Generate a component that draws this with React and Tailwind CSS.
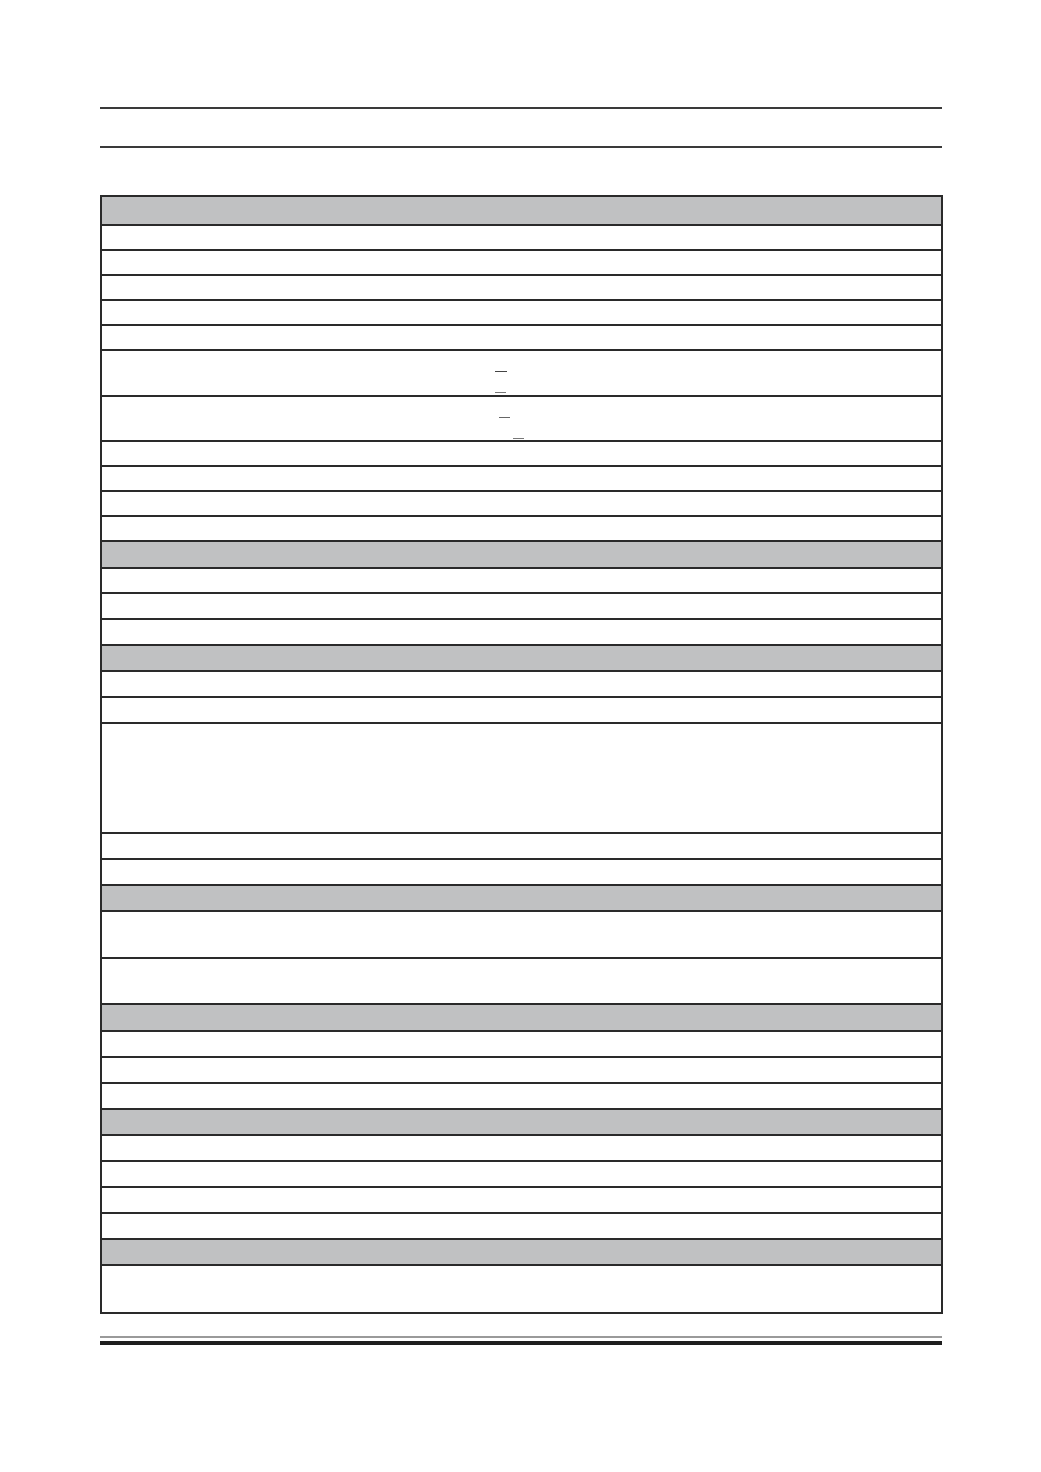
import React from "react";

const rows = [
  [29, true], [25], [25], [25], [25], [25], [46, false, "a"], [45, false, "b"],
  [25], [25], [25], [25], [27, true], [25], [26], [26], [26, true], [26], [26], [110],
  [26], [26], [26, true], [47], [46], [27, true], [26], [26], [26], [26, true], [26],
  [26], [26], [26], [26, true], [48],
];

function Dashes({ kind }) {
  if (kind === "a") {
    return (
      <div className="flex flex-col pt-[20px] pl-[393px]">
        <div className="w-[12px] h-[1px] bg-[#444]" />
        <div className="w-[11px] h-[1px] bg-[#777] mt-[20px]" />
      </div>
    );
  }
  return (
    <div className="flex flex-col pt-[20px]">
      <div className="w-[11px] h-[1px] bg-[#666] ml-[397px]" />
      <div className="w-[11px] h-[1px] bg-[#777] mt-[20px] ml-[411px]" />
    </div>
  );
}

export default function App() {
  return (
    <div className="w-[1041px] h-[1472px] bg-white pl-[100px] pt-[107px] font-['Liberation_Sans',sans-serif]">
      <div className="w-[842px] h-[2px] bg-[#3a3a3a]" />
      <div className="w-[842px] h-[2px] bg-[#3a3a3a] mt-[37px]" />
      <div className="w-[843px] mt-[47px] border-2 border-[#2a2a2a] flex flex-col">
        {rows.map(([h, gray, dash], i) => (
          <div
            key={i}
            style={{ height: i === rows.length - 1 ? h - 2 : h }}
            className={
              (i === rows.length - 1 ? "" : "border-b-2 border-[#2a2a2a] ") +
              (gray ? "bg-[#c0c1c2]" : "bg-white")
            }
          >
            {dash ? <Dashes kind={dash} /> : null}
          </div>
        ))}
      </div>
      <div className="w-[842px] h-[2px] bg-[#9a9a9a] mt-[22px]" />
      <div className="w-[842px] h-[4px] bg-[#1e1e1e] mt-[3px]" />
    </div>
  );
}
